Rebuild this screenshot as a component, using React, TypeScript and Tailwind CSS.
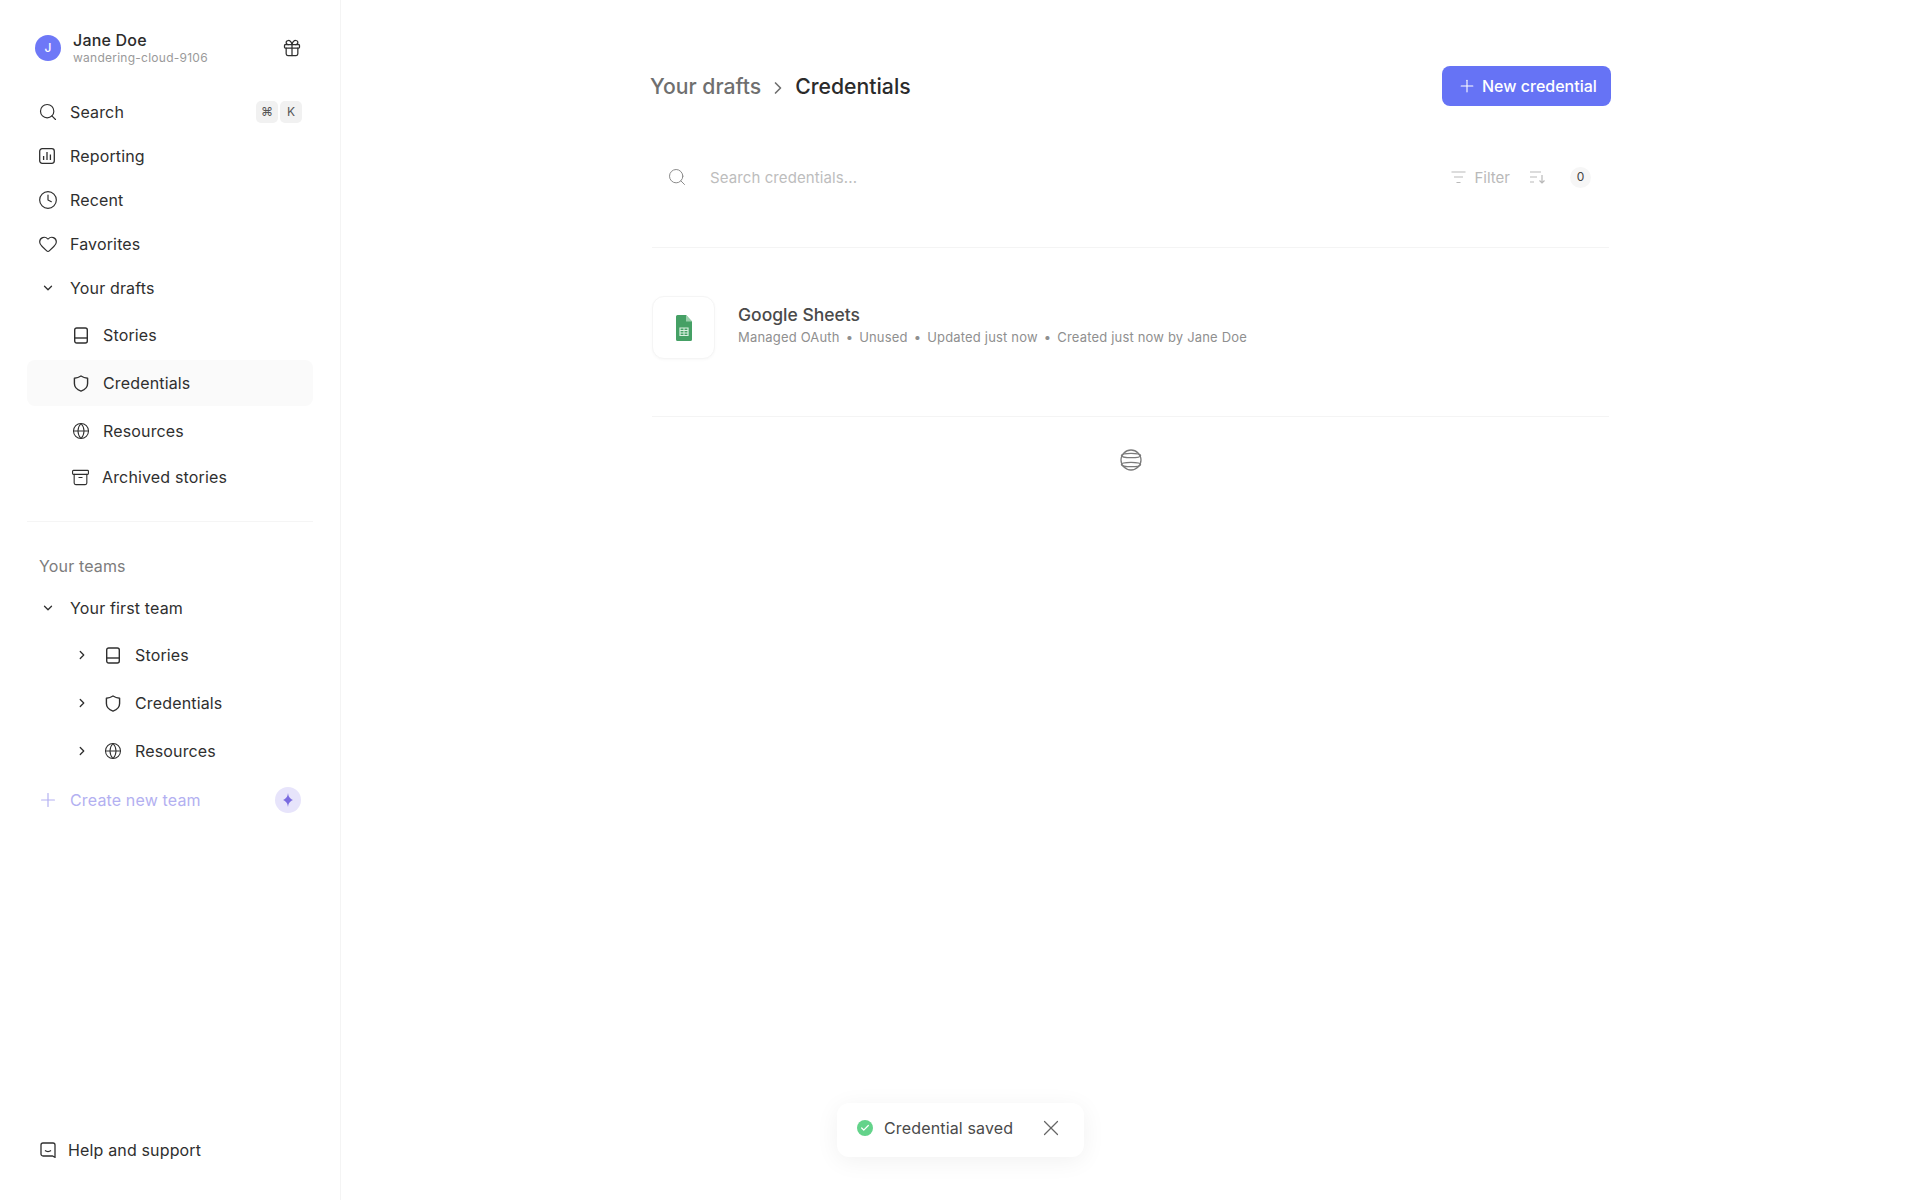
import { Archive, Check, ChevronDown, ChevronRight, Clock, Gift, Globe, Heart, Plus, Search, X } from "lucide-react";
import type { ReactNode } from "react";

function StoryIcon() {
    return (
        <svg width="16" height="17" viewBox="0 0 16 17" fill="none" stroke="currentColor" strokeWidth="1.4" className="shrink-0">
            <rect x="1.7" y="1" width="12.6" height="15" rx="2" />
            <path d="M1.7 11h12.6" />
        </svg>
    );
}

function ShieldIcon() {
    return (
        <svg width="16" height="17" viewBox="0 0 16 17" fill="none" stroke="currentColor" strokeWidth="1.4" className="shrink-0">
            <path d="M8 1c2 1.300 4.200 2 6.600 2.200V8.500c0 3.700-2.800 6.300-6.600 7.600-3.800-1.300-6.600-3.900-6.600-7.600V3.200C3.800 3 6 2.300 8 1Z" strokeLinejoin="round" />
        </svg>
    );
}

function ReportIcon() {
    return (
        <svg width="16" height="16" viewBox="0 0 16 16" fill="none" stroke="currentColor" strokeWidth="1.3" className="shrink-0">
            <rect x="0.7" y="0.7" width="14.6" height="14.6" rx="2.5" />
            <path d="M4.600 8v4M8 4v8M11.400 6.500V12" />
        </svg>
    );
}

function HelpIcon() {
    return (
        <svg width="16" height="16" viewBox="0 0 16 16" fill="none" stroke="currentColor" strokeWidth="1.3" className="shrink-0">
            <path d="M3 1h10a2 2 0 0 1 2 2v12.300L12.400 14H3a2 2 0 0 1-2-2V3a2 2 0 0 1 2-2Z" />
            <path d="M5 8.500c1.600 1.300 4.400 1.300 6 0" />
        </svg>
    );
}

function SortIcon() {
    return (
        <svg width="17" height="14" viewBox="0 0 17 14" fill="none" stroke="currentColor" strokeWidth="1.2">
            <path d="M1 2h11M1 7h7M1 12h4M13 5v8M10.500 10.500 13 13l2.500-2.500" />
        </svg>
    );
}

function FilterIcon() {
    return (
        <svg width="15" height="13" viewBox="0 0 15 13" fill="none" stroke="currentColor" strokeWidth="1.2">
            <path d="M0.500 1h14M3 6h9M5.500 11.500h4" />
        </svg>
    );
}

function SheetsIcon() {
    return (
        <svg width="16" height="26" viewBox="0 0 16 26">
            <path d="M1.500 0H10l6 6.500V24.500a1.500 1.500 0 0 1-1.500 1.500h-13A1.500 1.500 0 0 1 0 24.500v-23A1.500 1.500 0 0 1 1.500 0Z" fill="#45a065" />
            <path d="M10 0l6 6.500h-6Z" fill="#9ad0ac" />
            <path d="M4 13h8v7.500H4Z" fill="none" stroke="#d9efe0" strokeWidth="1.2" />
            <path d="M4 15.500h8M4 18h8M8 13v7.500" stroke="#d9efe0" strokeWidth="1" />
        </svg>
    );
}

function SpinnerIcon() {
    return (
        <svg width="22" height="22" viewBox="0 0 22 22" fill="none" stroke="#7a7a7a" strokeWidth="1.3">
            <rect x="1" y="1" width="20" height="20" rx="10" />
            <ellipse cx="11" cy="6.500" rx="9.600" ry="2.200" />
            <ellipse cx="11" cy="15.500" rx="9.600" ry="2.200" />
        </svg>
    );
}

function NavRow({ icon, label, right }: { icon: ReactNode; label: string; right?: ReactNode }) {
    return (
        <div className="flex h-[44px] items-center pl-[39px] pr-[38px] text-[#2f2f2f]">
            <span className="flex w-[31px] shrink-0 items-center">{icon}</span>
            <span className="text-[16px] leading-5 tracking-[0.15px]">{label}</span>
            {right && <span className="ml-auto flex gap-[2px]">{right}</span>}
        </div>
    );
}

function SubRow({ icon, label, active }: { icon: ReactNode; label: string; active?: boolean }) {
    return (
        <div className={`mx-[27px] flex h-[46px] items-center pl-[46px] text-[#2f2f2f] ${active ? "rounded-lg bg-[#fafafa]" : ""}`}>
            <span className="flex w-[30px] shrink-0 items-center">{icon}</span>
            <span className="text-[16px] leading-5 tracking-[0.15px]">{label}</span>
        </div>
    );
}

function TeamRow({ icon, label }: { icon: ReactNode; label: string }) {
    return (
        <div className="flex h-[48px] items-center pl-[75px] text-[#2f2f2f]">
            <ChevronRight size={14} strokeWidth={2.2} className="shrink-0" />
            <span className="ml-[16px] flex w-[30px] shrink-0 items-center">{icon}</span>
            <span className="text-[16px] leading-5 tracking-[0.15px]">{label}</span>
        </div>
    );
}

function Key({ children }: { children: ReactNode }) {
    return <kbd className="flex h-[22px] w-[22px] items-center justify-center rounded-[5px] bg-[#f1f1f1] font-['Inter',sans-serif] text-[12px] text-[#555]">{children}</kbd>;
}

function Sidebar() {
    return (
        <aside className="flex h-[1200px] w-[341px] shrink-0 flex-col border-r border-[#f4f4f4] pb-[35px] pt-[30px]">
            <div className="flex items-center pl-[35px] pr-[38px]">
                <div className="flex h-[26px] w-[26px] items-center justify-center rounded-full bg-[#6e78f7] text-[12px] font-medium text-white">J</div>
                <div className="ml-[12px]">
                    <div className="text-[16px] font-medium leading-[20px] tracking-[0.2px] text-[#2b2b2b]">Jane Doe</div>
                    <div className="text-[12px] leading-[16px] tracking-[0.25px] text-[#9a9a9a]">wandering-cloud-9106</div>
                </div>
                <Gift size={20} strokeWidth={1.5} className="ml-auto text-[#2f2f2f]" />
            </div>
            <div className="mt-[24px]">
                <NavRow icon={<Search size={20} strokeWidth={1.4} className="-ml-[1px]" />} label="Search" right={<><Key>⌘</Key><Key>K</Key></>} />
                <NavRow icon={<ReportIcon />} label="Reporting" />
                <NavRow icon={<Clock size={20} strokeWidth={1.4} className="-ml-[1px]" />} label="Recent" />
                <NavRow icon={<Heart size={20} strokeWidth={1.4} className="-ml-[1px]" />} label="Favorites" />
                <NavRow icon={<ChevronDown size={14} strokeWidth={2.2} className="ml-[2px]" />} label="Your drafts" />
            </div>
            <div className="mt-[2px]">
                <div className="flex flex-col gap-[2px]">
                    <SubRow icon={<StoryIcon />} label="Stories" />
                    <SubRow icon={<ShieldIcon />} label="Credentials" active />
                    <SubRow icon={<Globe size={18} strokeWidth={1.4} className="-ml-[1px]" />} label="Resources" />
                </div>
                <div className="mx-[27px] flex h-[46px] items-center pl-[44px] text-[#2f2f2f]">
                    <span className="flex w-[31px] shrink-0 items-center"><Archive size={19} strokeWidth={1.4} /></span>
                    <span className="text-[16px] leading-5 tracking-[0.15px]">Archived stories</span>
                </div>
            </div>
            <div className="mx-[27px] mt-[21px] border-t border-[#f5f5f5]" />
            <div className="mt-[34px] pl-[39px] text-[16px] leading-5 tracking-[0.15px] text-[#7c7c7c]">Your teams</div>
            <div className="mt-[10px]">
                <NavRow icon={<ChevronDown size={14} strokeWidth={2.2} className="ml-[2px]" />} label="Your first team" />
            </div>
            <div className="mt-[1px]">
                <TeamRow icon={<StoryIcon />} label="Stories" />
                <TeamRow icon={<ShieldIcon />} label="Credentials" />
                <TeamRow icon={<Globe size={18} strokeWidth={1.4} className="-ml-[1px]" />} label="Resources" />
            </div>
            <div className="flex h-[50px] items-center pl-[37px] pr-[39px] text-[#b3b0f1]">
                <span className="flex w-[33px] shrink-0 items-center"><Plus size={22} strokeWidth={1.3} /></span>
                <span className="text-[16px] leading-5 tracking-[0.15px]">Create new team</span>
                <span className="ml-auto flex h-[26px] w-[26px] items-center justify-center rounded-full bg-[#e7e4fb]">
                    <svg width="10" height="14" viewBox="0 0 10 14" fill="#7a6be0"><path d="M5 0c.5 3.600 1.600 5.600 5 7-3.400 1.400-4.500 3.400-5 7-.5-3.600-1.600-5.600-5-7 3.400-1.400 4.500-3.400 5-7Z" /></svg>
                </span>
            </div>
            <div className="mt-auto flex h-[30px] items-center pl-[40px] text-[#2f2f2f]">
                <span className="flex w-[28px] shrink-0 items-center"><HelpIcon /></span>
                <span className="text-[16px] leading-5 tracking-[0.15px]">Help and support</span>
            </div>
        </aside>
    );
}

export default function App() {
    return (
        <div className="relative flex h-[1200px] bg-white font-['Inter',sans-serif]">
            <Sidebar />
            <main className="min-w-0 flex-1">
                <div className="mx-auto w-[961px]">
                    <div className="mt-[66px] flex h-[40px] items-center justify-between">
                        <div className="flex items-center text-[21.2px] font-medium leading-7">
                            <span className="text-[#6f6f6f]">Your drafts</span>
                            <ChevronRight size={20} strokeWidth={2} className="mx-[7px] mt-[3px] text-[#6f6f6f]" />
                            <span className="text-[#2b2b2b]">Credentials</span>
                        </div>
                        <button className="flex h-[40px] w-[169px] items-center gap-[5px] rounded-lg bg-[#6673f5] pl-[15px] text-[16px] font-medium text-white">
                            <Plus size={20} strokeWidth={1.3} />
                            New credential
                        </button>
                    </div>
                    <div className="mt-[51px] flex h-[40px] items-center pl-[17px] pr-[20px]">
                        <Search size={20} strokeWidth={1.2} className="text-[#8b8b8b]" />
                        <span className="ml-[23px] mt-[2px] text-[15px] tracking-[0.1px] text-[#bdbdbd]">Search credentials...</span>
                        <div className="ml-auto flex items-center text-[#b9b9b9]">
                            <FilterIcon />
                            <span className="ml-[9px] mt-[2px] text-[15px]">Filter</span>
                            <span className="ml-[19px]"><SortIcon /></span>
                            <span className="ml-[24px] flex h-[21px] w-[21px] items-center justify-center rounded-full bg-[#f6f6f6] text-[12px] text-[#444]">0</span>
                        </div>
                    </div>
                    <div className="mx-[2px] mt-[50px] border-t border-[#f4f4f4]" />
                    <div className="flex h-[168px] items-start pl-[2px] pt-[48px]">
                        <div className="flex h-[63px] w-[63px] items-center justify-center rounded-xl border border-[#f5f5f5] bg-white shadow-[0_1px_3px_rgba(0,0,0,0.03)]">
                            <SheetsIcon />
                        </div>
                        <div className="ml-[23px] mt-[8px]">
                            <div className="text-[17.5px] font-medium leading-[22px] text-[#4a4a4a]">Google Sheets</div>
                            <div className="mt-[2px] flex items-center text-[13px] leading-[18px] tracking-[0.18px] text-[#8f8f8f]">
                                <span>Managed OAuth</span>
                                <span className="mx-[6px]">•</span>
                                <span>Unused</span>
                                <span className="mx-[6px]">•</span>
                                <span>Updated just now</span>
                                <span className="mx-[6px]">•</span>
                                <span>Created just now by Jane Doe</span>
                            </div>
                        </div>
                    </div>
                    <div className="mx-[2px] border-t border-[#f4f4f4]" />
                    <div className="mt-[32px] flex justify-center">
                        <SpinnerIcon />
                    </div>
                </div>
            </main>
            <div className="absolute left-[837px] top-[1103px] flex h-[54px] w-[247px] items-center rounded-xl bg-white pb-[5px] pl-[20px] shadow-[0_4px_24px_rgba(0,0,0,0.06)]">
                <span className="flex h-4 w-4 items-center justify-center rounded-full bg-[#63d38a] text-white">
                    <Check size={10} strokeWidth={3} />
                </span>
                <span className="ml-[11px] text-[16px] tracking-[0.15px] text-[#4a4a4a]">Credential saved</span>
                <X size={26} strokeWidth={1.1} className="ml-[25px] text-[#666]" />
            </div>
        </div>
    );
}
